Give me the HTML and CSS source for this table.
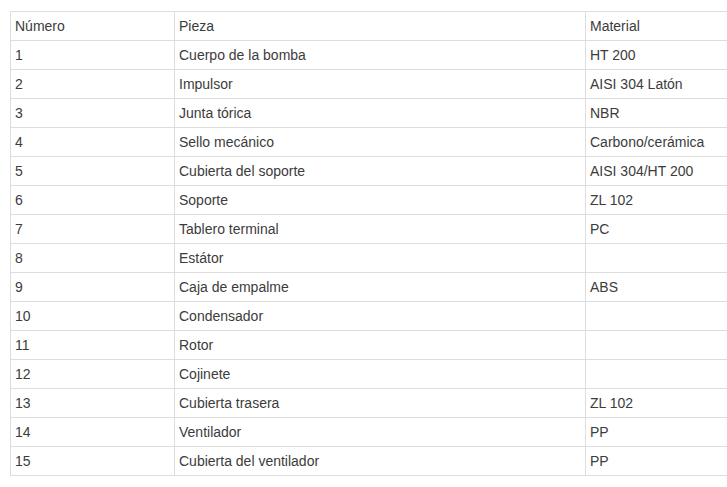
FILE: index.html
```html
<!DOCTYPE html>
<html lang="es">
<head>
<meta charset="utf-8">
<title>Piezas</title>
<link rel="stylesheet" href="styles.css">
</head>
<body>
<table class="parts">
  <colgroup>
    <col class="c-num">
    <col class="c-part">
    <col class="c-mat">
  </colgroup>
  <tbody>
    <tr><td>Número</td><td>Pieza</td><td>Material</td></tr>
    <tr><td>1</td><td>Cuerpo de la bomba</td><td>HT 200</td></tr>
    <tr><td>2</td><td>Impulsor</td><td>AISI 304 Latón</td></tr>
    <tr><td>3</td><td>Junta tórica</td><td>NBR</td></tr>
    <tr><td>4</td><td>Sello mecánico</td><td>Carbono/cerámica</td></tr>
    <tr><td>5</td><td>Cubierta del soporte</td><td>AISI 304/HT 200</td></tr>
    <tr><td>6</td><td>Soporte</td><td>ZL 102</td></tr>
    <tr><td>7</td><td>Tablero terminal</td><td>PC</td></tr>
    <tr><td>8</td><td>Estátor</td><td></td></tr>
    <tr><td>9</td><td>Caja de empalme</td><td>ABS</td></tr>
    <tr><td>10</td><td>Condensador</td><td></td></tr>
    <tr><td>11</td><td>Rotor</td><td></td></tr>
    <tr><td>12</td><td>Cojinete</td><td></td></tr>
    <tr><td>13</td><td>Cubierta trasera</td><td>ZL 102</td></tr>
    <tr><td>14</td><td>Ventilador</td><td>PP</td></tr>
    <tr><td>15</td><td>Cubierta del ventilador</td><td>PP</td></tr>
  </tbody>
</table>
</body>
</html>
```
FILE: styles.css
```css
html, body {
  margin: 0;
  padding: 0;
  background: #ffffff;
  overflow: hidden;
}
body {
  padding: 11px 0 0 10px;
  font-family: "Liberation Sans", Arial, sans-serif;
  font-size: 14px;
  color: #3c3c3c;
}
.parts {
  border-collapse: collapse;
  table-layout: fixed;
  width: 740px;
}
.c-num { width: 164px; }
.c-part { width: 411px; }
.c-mat { width: 165px; }
.parts td {
  border: 1px solid #dddddd;
  height: 28px;
  padding: 0 4px;
  box-sizing: border-box;
  vertical-align: middle;
  line-height: 16px;
  white-space: nowrap;
}
.parts tr td { height: 29px; }
```
